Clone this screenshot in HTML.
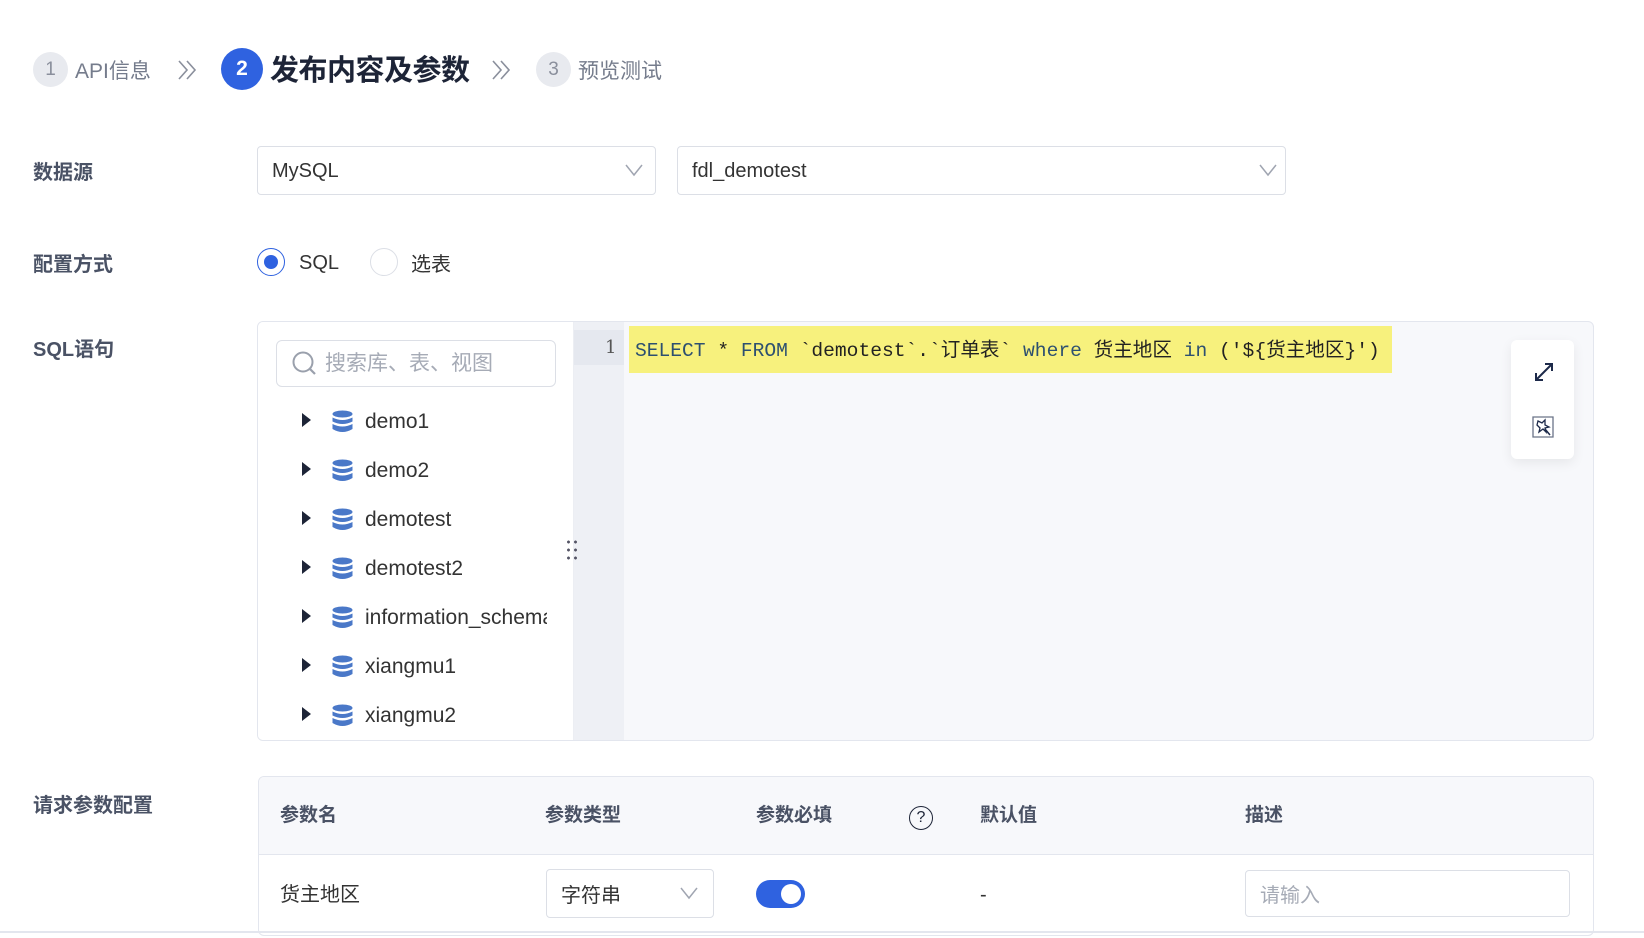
<!DOCTYPE html>
<html><head><meta charset="utf-8"><style>
*{box-sizing:border-box;margin:0;padding:0}
body{width:1644px;height:938px;background:#fff;font-family:"Liberation Sans","Noto Sans CJK SC",sans-serif;color:#222b45;position:relative;overflow:hidden}
.a{position:absolute}
.circ{border-radius:50%;display:flex;align-items:center;justify-content:center}
.lbl{font-size:20px;font-weight:bold;color:#4a5265}
.sel{border:1px solid #dcdfe6;border-radius:4px;font-size:20px;color:#333;display:flex;align-items:center;padding-left:14px}
.tree{font-size:21px;color:#333}
.th{font-size:19px;font-weight:bold;color:#4a5265;top:800px}
</style></head><body>
<div class="a circ" style="left:33px;top:52px;width:35px;height:35px;background:#e8eaef;color:#8a8f9c;font-size:19px">1</div>
<div class="a" style="left:75px;top:55px;font-size:21px;color:#757c8c">API信息</div>
<svg class="a" style="left:176px;top:59px" width="22" height="22" viewBox="0 0 22 22"><path d="M3 2l8 9-8 9M11 2l8 9-8 9" fill="none" stroke="#8a8f9c" stroke-width="1.6"/></svg>
<div class="a circ" style="left:221px;top:48px;width:42px;height:42px;background:#2f62e0;color:#fff;font-size:21px;font-weight:bold">2</div>
<div class="a" style="left:270px;top:47px;font-size:29px;font-weight:bold;color:#1d2437;letter-spacing:-0.5px">发布内容及参数</div>
<svg class="a" style="left:490px;top:59px" width="22" height="22" viewBox="0 0 22 22"><path d="M3 2l8 9-8 9M11 2l8 9-8 9" fill="none" stroke="#8a8f9c" stroke-width="1.6"/></svg>
<div class="a circ" style="left:536px;top:52px;width:35px;height:35px;background:#e8eaef;color:#8a8f9c;font-size:19px">3</div>
<div class="a" style="left:578px;top:55px;font-size:21px;color:#757c8c">预览测试</div>
<div class="a lbl" style="left:33px;top:156px">数据源</div>
<div class="a sel" style="left:257px;top:146px;width:399px;height:49px;padding-top:2px">MySQL</div>
<svg class="a" style="left:624px;top:162px" width="20" height="16"><path d="M2 3l8 10 8-10" fill="none" stroke="#a0a5b1" stroke-width="1.5"/></svg>
<div class="a sel" style="left:677px;top:146px;width:609px;height:49px;padding-top:2px">fdl_demotest</div>
<svg class="a" style="left:1258px;top:162px" width="20" height="16"><path d="M2 3l8 10 8-10" fill="none" stroke="#a0a5b1" stroke-width="1.5"/></svg>
<div class="a lbl" style="left:33px;top:248px">配置方式</div>
<div class="a circ" style="left:257px;top:248px;width:28px;height:28px;border:1.5px solid #2f62e0"><div style="width:14px;height:14px;border-radius:50%;background:#2f62e0"></div></div>
<div class="a" style="left:299px;top:252px;font-size:20px;color:#333">SQL</div>
<div class="a circ" style="left:370px;top:248px;width:28px;height:28px;border:1px solid #dcdfe6"></div>
<div class="a" style="left:411px;top:248px;font-size:20px;color:#333">选表</div>
<div class="a lbl" style="left:33px;top:333px">SQL语句</div>
<div class="a" style="left:257px;top:321px;width:1337px;height:420px;border:1px solid #e3e6ee;border-radius:6px;background:#f7f8fb;overflow:hidden">
 <div class="a" style="left:0;top:0;width:316px;height:420px;background:#fff;border-right:1px solid #eceef3"></div>
 <div class="a" style="left:316px;top:0;width:50px;height:420px;background:#eef0f5"></div>
 <div class="a" style="left:316px;top:8px;width:50px;height:35px;background:#e5e8ef"></div>
</div>
<div class="a" style="left:276px;top:340px;width:280px;height:47px;border:1px solid #dcdfe6;border-radius:6px"></div>
<svg class="a" style="left:291px;top:350px" width="28" height="28"><circle cx="12" cy="12" r="9.5" fill="none" stroke="#9aa0ac" stroke-width="2"/><path d="M19 19l5 5" stroke="#9aa0ac" stroke-width="2.2"/></svg>
<div class="a" style="left:325px;top:347px;font-size:21px;color:#a6abb6">搜索库、表、视图</div>
<div class="a" style="left:565px;top:538px;width:12px;height:24px;background:radial-gradient(circle,#556 1.3px,transparent 1.6px) 0 0/7px 8px"></div>
<div class="a" style="left:605px;top:337px;font-family:'DejaVu Serif',serif;font-size:18px;color:#555">1</div>
<div class="a" style="left:629px;top:326px;width:763px;height:47px;background:#f7f17d"></div>
<div class="a" style="left:635px;top:333px;font-family:'Liberation Mono','Noto Sans CJK SC',monospace;font-size:19.6px;color:#222;white-space:pre"><span style="color:#2d5070">SELECT</span> * <span style="color:#2d5070">FROM</span> `demotest`.`订单表` <span style="color:#2d5070">where</span> 货主地区 <span style="color:#2d5070">in</span> ('${货主地区}')</div>
<div class="a" style="left:1511px;top:340px;width:63px;height:119px;background:#fff;border-radius:6px;box-shadow:0 4px 12px rgba(0,0,0,.07)"></div>
<svg class="a" style="left:1533px;top:361px" width="22" height="22" viewBox="0 0 22 22"><path d="M3 19L19 3M12 3h7v7M3 12v7h7" fill="none" stroke="#1d2a4a" stroke-width="2"/></svg>
<svg class="a" style="left:1531px;top:415px" width="24" height="24" viewBox="0 0 24 24"><path d="M2 2h20v20H2z" fill="none" stroke="#6a7388" stroke-width="1.3"/><path d="M7 6l4 2 3-3 0 5 4 2-4 1 1 4-3-3-4 3 1-4-3-3z" fill="none" stroke="#1d2a4a" stroke-width="1.3"/><path d="M14 14l5 6" stroke="#1d2a4a" stroke-width="1.5"/></svg>
<div id="rows"></div>
<div class="a lbl" style="left:33px;top:789px">请求参数配置</div>
<div class="a" style="left:258px;top:776px;width:1336px;height:160px;border:1px solid #e3e6ee;border-radius:6px;overflow:hidden">
 <div style="height:78px;background:#f7f8fb;border-bottom:1px solid #e3e6ee"></div>
</div>
<div class="a th" style="left:280px">参数名</div>
<div class="a th" style="left:545px">参数类型</div>
<div class="a th" style="left:756px">参数必填</div>
<div class="a circ" style="left:909px;top:806px;width:24px;height:24px;border:1.5px solid #1d2437;font-size:16px;color:#1d2437">?</div>
<div class="a th" style="left:980px">默认值</div>
<div class="a th" style="left:1245px">描述</div>
<div class="a" style="left:280px;top:878px;font-size:20px;color:#333">货主地区</div>
<div class="a sel" style="left:546px;top:869px;width:168px;height:49px">字符串</div>
<svg class="a" style="left:679px;top:885px" width="20" height="16"><path d="M2 3l8 10 8-10" fill="none" stroke="#a0a5b1" stroke-width="1.5"/></svg>
<div class="a" style="left:756px;top:880px;width:49px;height:28px;border-radius:14px;background:#2f62e0"><div class="a" style="left:25px;top:4px;width:20px;height:20px;border-radius:50%;background:#fff"></div></div>
<div class="a" style="left:980px;top:884px;font-size:20px;color:#333">-</div>
<div class="a sel" style="left:1245px;top:870px;width:325px;height:47px;color:#a6abb6">请输入</div>
<div class="a" style="left:0;top:931px;width:1644px;height:2px;background:#e3e6ee"></div>
<script>
var n=["demo1","demo2","demotest","demotest2","information_schema","xiangmu1","xiangmu2"],h="";
n.forEach(function(t,i){var y=422+i*49;
h+='<div class="a" style="left:302px;top:'+(y-9)+'px;width:0;height:0;border-left:9px solid #1d2437;border-top:7px solid transparent;border-bottom:7px solid transparent"></div>';
h+='<svg class="a" style="left:332px;top:'+(y-12)+'px" width="21" height="23" viewBox="0 0 21 23"><ellipse cx="10.5" cy="4" rx="10" ry="3.5" fill="#4a78c8"/><path d="M.5 7.5q10 5 20 0v4q-10 5-20 0zM.5 14q10 5 20 0v5q-10 6-20 0z" fill="#4a78c8"/></svg>';
h+='<div class="a tree" style="left:365px;top:'+(y-12)+'px;width:182px;overflow:hidden;white-space:nowrap">'+t+'</div>';});
document.getElementById("rows").innerHTML=h;
</script>
</body></html>
